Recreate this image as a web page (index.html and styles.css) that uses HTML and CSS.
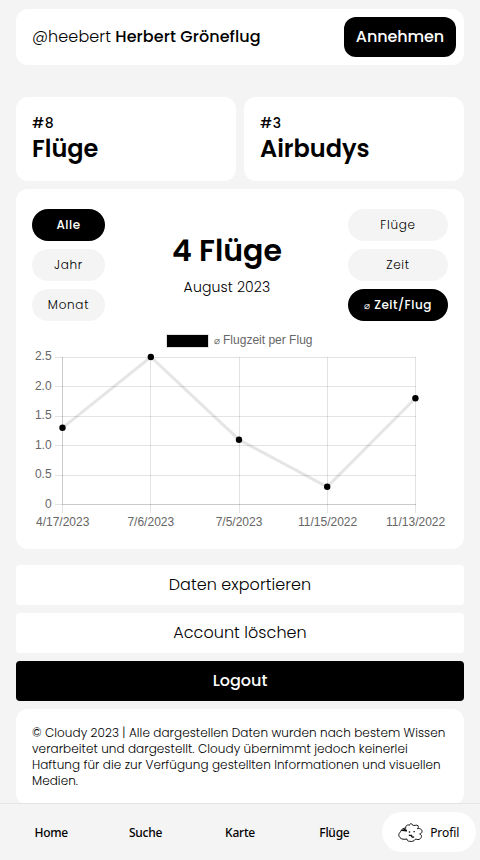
FILE: index.html
```html
<!DOCTYPE html>
<html lang="de">
<head>
<meta charset="utf-8">
<meta name="viewport" content="width=device-width, initial-scale=1">
<title>Cloudy – Profil</title>
<link rel="stylesheet" href="styles.css">
</head>
<body>
<main class="page">
  <section class="card request">
    <p class="request-name"><span class="handle">@heebert</span> <strong>Herbert Gröneflug</strong></p>
    <button class="accept">Annehmen</button>
  </section>

  <section class="ranks">
    <div class="card rank"><span class="rank-pos">#8</span><span class="rank-label">Flüge</span></div>
    <div class="card rank"><span class="rank-pos">#3</span><span class="rank-label">Airbudys</span></div>
  </section>

  <section class="card stats">
    <div class="stats-head">
      <div class="pills pills-range">
        <button class="pill active">Alle</button>
        <button class="pill">Jahr</button>
        <button class="pill">Monat</button>
      </div>
      <div class="summary">
        <h1>4 Flüge</h1>
        <p>August 2023</p>
      </div>
      <div class="pills pills-metric">
        <button class="pill">Flüge</button>
        <button class="pill">Zeit</button>
        <button class="pill active"><span class="avg">⌀</span> Zeit/Flug</button>
      </div>
    </div>
    <svg class="chart" viewBox="32 329 416 204" width="416" height="204">
      <rect x="167" y="335" width="41" height="12" fill="#000"/>
      <rect x="167" y="335" width="41" height="12" fill="none" stroke="#000" stroke-opacity=".12" stroke-width="2"/>
      <text x="214" y="344"><tspan class="avg">⌀</tspan><tspan x="223" textLength="89.5">Flugzeit per Flug</tspan></text>
      <g class="grid">
        <path d="M55 357.5H416M55 386.5H416M55 416.5H416M55 445.5H416M55 475.5H416M55 504.5H416"/>
        <path d="M62.5 357V513M150.5 357V513M239.5 357V513M327.5 357V513M415.5 357V513"/>
        <path d="M62.5 357V504M62 504.5H416"/>
      </g>
      <path class="line" d="M62.5 427.8L150.8 357L239 439.7L327.2 486.8L415.4 398.3"/>
      <g class="points">
        <circle cx="62.5" cy="427.8" r="3.2"/><circle cx="150.8" cy="357" r="3.2"/><circle cx="239" cy="439.7" r="3.2"/><circle cx="327.2" cy="486.8" r="3.2"/><circle cx="415.4" cy="398.3" r="3.2"/>
      </g>
      <g text-anchor="end">
        <text x="51.6" y="360">2.5</text><text x="51.6" y="390">2.0</text><text x="51.6" y="419">1.5</text><text x="51.6" y="449">1.0</text><text x="51.6" y="478">0.5</text><text x="51.6" y="508">0</text>
      </g>
      <g text-anchor="middle">
        <text x="62.7" y="526">4/17/2023</text><text x="150.8" y="526">7/6/2023</text><text x="239" y="526">7/5/2023</text><text x="327.6" y="526">11/15/2022</text><text x="415.6" y="526">11/13/2022</text>
      </g>
    </svg>
  </section>

  <section class="actions">
    <button class="action">Daten exportieren</button>
    <button class="action">Account löschen</button>
    <button class="action logout">Logout</button>
  </section>

  <footer class="card legal">© Cloudy 2023 | Alle dargestellen Daten wurden nach bestem Wissen verarbeitet und dargestellt. Cloudy übernimmt jedoch keinerlei Haftung für die zur Verfügung gestellten Informationen und visuellen Medien.</footer>
</main>

<nav class="tabs">
  <a>Home</a>
  <a>Suche</a>
  <a>Karte</a>
  <a>Flüge</a>
  <a class="current">
    <svg class="cloud" viewBox="-1 -1 75 58" width="25" height="19.3">
      <path d="M22 14C20 6 30 3 33 6C34 0 41 -1 42 5C48 9 54 3 59 7C62 12 59 14 57 16C68 14 72 20 71 26C70 30 67 31 64 32C71 34 71 42 66 46C62 50 56 49 52 47C48 53 41 56 34 54C28 54 26 51 26 47C18 49 9 48 5 43C-1 38 1 29 7 25C8 19 15 14 22 14"/>
      <path class="thick" d="M10 21C15 20 18 21 24 23M17 17L24 21"/>
      <path class="thick" d="M33 26H34M47 25H48M33 36C35 38 37 36 40 36C39 41 43 43 46 41"/>
    </svg>
    <span>Profil</span>
  </a>
</nav>
</body>
</html>
```
FILE: styles.css
```css
* { box-sizing: border-box; }

body {
  margin: 0;
  background: #f4f4f4;
  color: #000;
  font-family: Poppins, Inter, sans-serif;
}

h1, p { margin: 0; }

button {
  border: 0;
  padding: 0;
  color: inherit;
  font: inherit;
}

.page {
  display: flex;
  flex-direction: column;
  padding: 9px 16px 0;
}

.card {
  background: #fff;
  border-radius: 12px;
}

.request {
  display: flex;
  align-items: center;
  justify-content: space-between;
  height: 56px;
  padding: 0 8px 0 16px;
}

.request-name { font-size: 16px; line-height: 24px; letter-spacing: .08px; }
.request-name strong { font-weight: 500; }
.handle { font-weight: 300; }

.accept {
  width: 112px;
  height: 40px;
  padding-bottom: 1px;
  border-radius: 12px;
  background: #000;
  color: #fff;
  font-size: 16px;
  font-weight: 500;
  letter-spacing: -.1px;
}

.ranks {
  display: grid;
  grid-template-columns: 1fr 1fr;
  gap: 8px;
  margin: 32px 0 8px;
}

.rank {
  display: flex;
  flex-direction: column;
  height: 84px;
  padding: 16px;
}

.rank-pos { font-size: 14px; line-height: 20px; font-weight: 500; letter-spacing: .5px; }
.rank-label { font-size: 24px; line-height: 32px; font-weight: 600; }

.stats { height: 360px; padding: 20px 16px 16px; }

.stats-head { display: flex; justify-content: space-between; }

.pills { display: flex; flex-direction: column; gap: 8px; }
.pills-range { width: 73px; }
.pills-metric { width: 100px; }

.pill {
  height: 32px;
  border-radius: 16px;
  background: #f4f4f4;
  font-size: 12px;
  font-weight: 300;
  letter-spacing: .7px;
}

.pill.active { background: #000; color: #fff; font-weight: 500; letter-spacing: .5px; }
.avg { font-size: 10px; }

.summary {
  display: flex;
  flex-direction: column;
  justify-content: center;
  align-items: center;
  padding-left: 1px;
}

.summary h1 { font-size: 30px; line-height: 36px; font-weight: 600; }
.summary p { font-size: 14px; line-height: 20px; margin-top: 8px; font-weight: 300; letter-spacing: .15px; }

.chart {
  display: block;
  margin-top: 8px;
  font-family: "Liberation Sans", sans-serif;
  font-size: 12px;
}

.chart text { fill: #666; }
.grid path { fill: none; stroke: #000; stroke-opacity: .11; }
.line { fill: none; stroke: #000; stroke-opacity: .1; stroke-width: 3; }

.actions {
  display: flex;
  flex-direction: column;
  gap: 8px;
  margin: 16px 0 8px;
}

.action {
  height: 40px;
  padding-bottom: 1px;
  border-radius: 4px;
  background: #fff;
  font-size: 16px;
  font-weight: 300;
  letter-spacing: .05px;
}

.logout { background: #000; color: #fff; font-weight: 500; letter-spacing: 0; }

.legal {
  padding: 16px;
  font-size: 12px;
  line-height: 16px;
  font-weight: 300;
  letter-spacing: .06px;
}

.tabs {
  position: fixed;
  inset: auto 0 0;
  display: grid;
  grid-template-columns: repeat(5, 1fr);
  height: 57px;
  padding: 8px 4px;
  border-top: 1px solid #e5e5e5;
  background: #f4f4f4;
  font: 500 12px "Noto Sans", sans-serif;
}

.tabs a {
  display: flex;
  align-items: center;
  justify-content: center;
  gap: 7px;
  height: 40px;
  border-radius: 20px;
  letter-spacing: -.25px;
  padding-top: 1px;
}

.tabs .current { background: #fff; font-weight: 400; letter-spacing: -.05px; }

.cloud { fill: none; stroke: #111; stroke-width: 3; stroke-linecap: round; stroke-linejoin: round; }
.thick { stroke-width: 4; }
```
